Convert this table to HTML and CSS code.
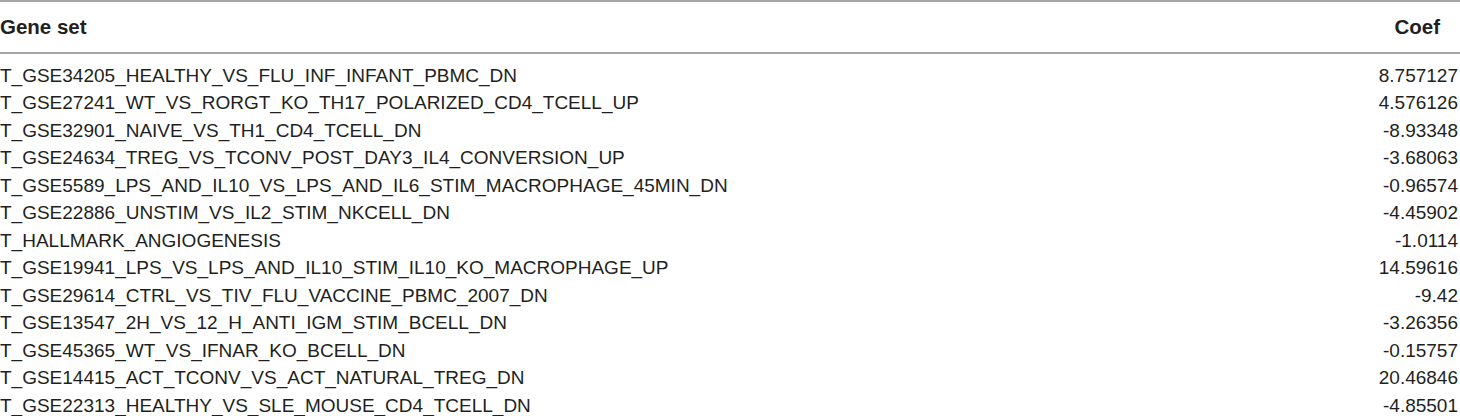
FILE: index.html
```html
<!DOCTYPE html>
<html>
<head>
<meta charset="utf-8">
<link rel="stylesheet" href="styles.css">
</head>
<body>
<table class="tbl">
<thead>
<tr><th class="name">Gene set</th><th class="coef head-coef">Coef</th></tr>
</thead>
<tbody>
<tr><td class="name">T_GSE34205_HEALTHY_VS_FLU_INF_INFANT_PBMC_DN</td><td class="coef">8.757127</td></tr>
<tr><td class="name">T_GSE27241_WT_VS_RORGT_KO_TH17_POLARIZED_CD4_TCELL_UP</td><td class="coef">4.576126</td></tr>
<tr><td class="name">T_GSE32901_NAIVE_VS_TH1_CD4_TCELL_DN</td><td class="coef">-8.93348</td></tr>
<tr><td class="name">T_GSE24634_TREG_VS_TCONV_POST_DAY3_IL4_CONVERSION_UP</td><td class="coef">-3.68063</td></tr>
<tr><td class="name">T_GSE5589_LPS_AND_IL10_VS_LPS_AND_IL6_STIM_MACROPHAGE_45MIN_DN</td><td class="coef">-0.96574</td></tr>
<tr><td class="name">T_GSE22886_UNSTIM_VS_IL2_STIM_NKCELL_DN</td><td class="coef">-4.45902</td></tr>
<tr><td class="name">T_HALLMARK_ANGIOGENESIS</td><td class="coef">-1.0114</td></tr>
<tr><td class="name">T_GSE19941_LPS_VS_LPS_AND_IL10_STIM_IL10_KO_MACROPHAGE_UP</td><td class="coef">14.59616</td></tr>
<tr><td class="name">T_GSE29614_CTRL_VS_TIV_FLU_VACCINE_PBMC_2007_DN</td><td class="coef">-9.42</td></tr>
<tr><td class="name">T_GSE13547_2H_VS_12_H_ANTI_IGM_STIM_BCELL_DN</td><td class="coef">-3.26356</td></tr>
<tr><td class="name">T_GSE45365_WT_VS_IFNAR_KO_BCELL_DN</td><td class="coef">-0.15757</td></tr>
<tr><td class="name">T_GSE14415_ACT_TCONV_VS_ACT_NATURAL_TREG_DN</td><td class="coef">20.46846</td></tr>
<tr><td class="name">T_GSE22313_HEALTHY_VS_SLE_MOUSE_CD4_TCELL_DN</td><td class="coef">-4.85501</td></tr>
</tbody>
</table>
</body>
</html>
```
FILE: styles.css
```css
html, body {
  margin: 0;
  padding: 0;
  background: #ffffff;
}
body {
  font-family: "Liberation Sans", Arial, sans-serif;
  color: #231f20;
  font-size: 19px;
}
.tbl {
  width: 1460px;
  border-collapse: collapse;
  border-top: 2px solid #a5a5a5;
}
.tbl th {
  font-weight: bold;
  font-size: 20.5px;
  height: 49px;
  padding: 0 0 1px 0;
  border-bottom: 2px solid #a5a5a5;
  vertical-align: middle;
}
.tbl td {
  height: 27.5px;
  padding: 0;
  line-height: 22px;
  vertical-align: middle;
}
.tbl tbody tr:first-child td {
  padding-top: 8px;
}
.name {
  text-align: left;
  padding-left: 0;
}
.coef {
  text-align: right;
  padding-right: 2px !important;
}
.tbl th.head-coef {
  padding-right: 20px !important;
}
```
